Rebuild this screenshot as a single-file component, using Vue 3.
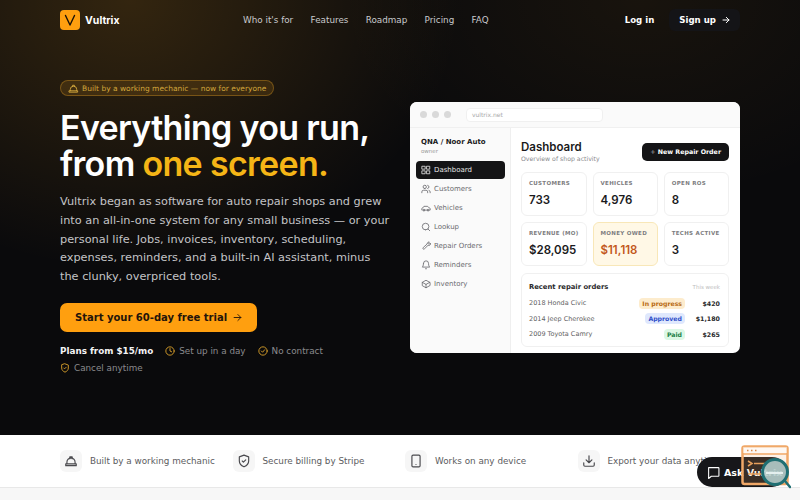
<template>
  <div class="page">
    <section class="hero">
      <header class="nav">
        <div class="brand">
          <span class="logo">
            <svg width="20" height="20" viewBox="0 0 20 20" fill="none" stroke="#1a1208" stroke-width="1.4" stroke-linecap="round" stroke-linejoin="round"><path d="M5.5 5.500l4.500 9.500 4.500-9.500" /></svg>
          </span>
          <span class="brand-name">Vultrix</span>
        </div>
        <nav class="links">
          <a v-for="link in links" :key="link">{{ link }}</a>
        </nav>
        <div class="actions">
          <a class="login">Log in</a>
          <a class="signup">Sign up
            <svg width="8" height="8" viewBox="0 0 24 24" fill="none" stroke="currentColor" stroke-width="3" stroke-linecap="round" stroke-linejoin="round"><path d="M3 12h18M13 4l8 8-8 8" /></svg>
          </a>
        </div>
      </header>

      <div class="hero-body">
        <div class="copy">
          <div class="badge">
            <svg width="11" height="11" viewBox="0 0 24 24" fill="none" stroke="currentColor" stroke-width="2" stroke-linecap="round" stroke-linejoin="round"><path d="M3 17h18v3H3zM5 17v-3a7 7 0 0 1 14 0v3M10 8V5h4v3" /></svg>
            Built by a working mechanic — now for everyone
          </div>
          <h1>Everything you run,<br />from <span>one screen.</span></h1>
          <p class="lead">Vultrix began as software for auto repair shops and grew into an all-in-one system for any small business — or your personal life. Jobs, invoices, inventory, scheduling, expenses, reminders, and a built-in AI assistant, minus the clunky, overpriced tools.</p>
          <a class="cta">Start your 60-day free trial
            <svg width="9" height="9" viewBox="0 0 24 24" fill="none" stroke="currentColor" stroke-width="2.4" stroke-linecap="round" stroke-linejoin="round"><path d="M3 12h18M13 4l8 8-8 8" /></svg>
          </a>
          <div class="perks">
            <strong>Plans from $15/mo</strong>
            <span class="perk">
              <svg width="10" height="10" viewBox="0 0 24 24" fill="none" stroke="#d9a02b" stroke-width="2.2" stroke-linecap="round" stroke-linejoin="round"><circle cx="12" cy="12" r="10" /><path d="M12 6v6l4 2" /></svg>
              Set up in a day
            </span>
            <span class="perk">
              <svg width="10" height="10" viewBox="0 0 24 24" fill="none" stroke="#d9a02b" stroke-width="2.2" stroke-linecap="round" stroke-linejoin="round"><circle cx="12" cy="12" r="10" /><path d="M8 12l3 3 5-6" /></svg>
              No contract
            </span>
            <span class="perk">
              <svg width="10" height="10" viewBox="0 0 24 24" fill="none" stroke="#d9a02b" stroke-width="2.2" stroke-linecap="round" stroke-linejoin="round"><path d="M12 2l8 3v7c0 5-3.500 8-8 10-4.500-2-8-5-8-10V5z" /><path d="M9 12l2 2 4-4" /></svg>
              Cancel anytime
            </span>
          </div>
        </div>

        <div class="app">
          <div class="chrome">
            <i></i><i></i><i></i>
            <div class="url">vultrix.net</div>
          </div>
          <div class="app-body">
            <aside class="side">
              <div class="org">QNA / Noor Auto</div>
              <div class="role">owner</div>
              <div v-for="item in menu" :key="item.label" class="menu-item" :class="{ active: item.label === 'Dashboard' }">
                <svg width="10" height="10" viewBox="0 0 24 24" fill="none" stroke="currentColor" stroke-width="2" stroke-linecap="round" stroke-linejoin="round"><path :d="item.icon" /></svg>
                {{ item.label }}
              </div>
            </aside>
            <main class="main">
              <div class="main-head">
                <div>
                  <div class="title">Dashboard</div>
                  <div class="sub">Overview of shop activity</div>
                </div>
                <a class="new-order"><span>+</span> New Repair Order</a>
              </div>
              <div class="stats">
                <div v-for="stat in stats" :key="stat.label" class="stat" :class="{ owed: stat.label === 'MONEY OWED' }">
                  <div class="stat-label">{{ stat.label }}</div>
                  <div class="stat-value">{{ stat.value }}</div>
                </div>
              </div>
              <div class="recent">
                <div class="recent-head">
                  <span>Recent repair orders</span>
                  <small>This week</small>
                </div>
                <div v-for="order in orders" :key="order.car" class="order">
                  <span class="car">{{ order.car }}</span>
                  <span class="pill" :class="order.kind">{{ order.status }}</span>
                  <span class="price">{{ order.price }}</span>
                </div>
              </div>
            </main>
          </div>
        </div>
      </div>
    </section>

    <section class="strip">
      <div v-for="item in strip" :key="item.label" class="strip-item">
        <span class="strip-icon">
          <svg width="14" height="14" viewBox="0 0 24 24" fill="none" stroke="currentColor" stroke-width="2" stroke-linecap="round" stroke-linejoin="round"><path :d="item.icon" /></svg>
        </span>
        {{ item.label }}
      </div>
    </section>
    <div class="below"></div>

    <a class="ask">
      <svg width="13" height="13" viewBox="0 0 24 24" fill="none" stroke="currentColor" stroke-width="2" stroke-linecap="round" stroke-linejoin="round"><path d="M3 3h18a1 1 0 0 1 1 1v14a1 1 0 0 1-1 1H8l-5 4z" /></svg>
      Ask Vultrix
    </a>
    <svg class="promo" width="50" height="48" viewBox="0 0 50 48" fill="none">
      <rect x="1.500" y="1.500" width="45" height="37.500" rx="2" fill="#f0a868" fill-opacity=".16" stroke="#f0a868" stroke-width="2.500" />
      <rect x="2" y="2" width="44" height="6" fill="#fff" fill-opacity=".5" />
      <path d="M2 9h44" stroke="#f0a868" stroke-width="1.500" />
      <path d="M6 5.500h1.500M10 5.500h1.500M14 5.500h1.500" stroke="#d9894a" stroke-width="1.500" />
      <path d="M7 16l4 2.500-4 2.500M13 18.500h12M7 29h14" stroke="#e8a05c" stroke-width="1.500" />
      <circle cx="34" cy="27" r="12.500" fill="#b4cdcc" fill-opacity=".9" stroke="#1f6f73" stroke-width="3" />
      <path d="M25 28h17" stroke="#e4efee" stroke-width="2" />
      <path d="M44 36l5 6" stroke="#1f6f73" stroke-width="2.500" stroke-linecap="round" />
    </svg>
  </div>
</template>

<script setup>
const links = ["Who it's for", 'Features', 'Roadmap', 'Pricing', 'FAQ']

const menu = [
  { label: 'Dashboard', icon: 'M3 3h7v7H3zM14 3h7v7h-7zM3 14h7v7H3zM14 14h7v7h-7z' },
  { label: 'Customers', icon: 'M16 21v-2a4 4 0 0 0-4-4H6a4 4 0 0 0-4 4v2M9 11a4 4 0 1 0 0-8 4 4 0 0 0 0 8M22 21v-2a4 4 0 0 0-3-3.900M16 3.100a4 4 0 0 1 0 7.800' },
  { label: 'Vehicles', icon: 'M3 17H2v-4l2-1 3-4h9l4 4 2 1v4h-2M7 17h10M7 19a2 2 0 1 0 0-4 2 2 0 0 0 0 4M17 19a2 2 0 1 0 0-4 2 2 0 0 0 0 4' },
  { label: 'Lookup', icon: 'M11 19a8 8 0 1 0 0-16 8 8 0 0 0 0 16M21 21l-4.300-4.300' },
  { label: 'Repair Orders', icon: 'M14.700 6.300a4 4 0 0 1 5.400-3.700l-3 3 2.300 2.300 3-3a4 4 0 0 1-5.400 5.400L8 19a2.100 2.100 0 0 1-3-3z' },
  { label: 'Reminders', icon: 'M6 8a6 6 0 0 1 12 0c0 7 3 9 3 9H3s3-2 3-9M10.300 21a2 2 0 0 0 3.400 0' },
  { label: 'Inventory', icon: 'M21 8l-9-5-9 5v8l9 5 9-5zM3 8l9 5 9-5M12 13v8' },
]

const stats = [
  { label: 'CUSTOMERS', value: '733' },
  { label: 'VEHICLES', value: '4,976' },
  { label: 'OPEN ROS', value: '8' },
  { label: 'REVENUE (MO)', value: '$28,095' },
  { label: 'MONEY OWED', value: '$11,118' },
  { label: 'TECHS ACTIVE', value: '3' },
]

const orders = [
  { car: '2018 Honda Civic', status: 'In progress', kind: 'amber', price: '$420' },
  { car: '2014 Jeep Cherokee', status: 'Approved', kind: 'blue', price: '$1,180' },
  { car: '2009 Toyota Camry', status: 'Paid', kind: 'green', price: '$265' },
]

const strip = [
  { label: 'Built by a working mechanic', icon: 'M3 17h18v3H3zM5 17v-3a7 7 0 0 1 14 0v3M10 8V5h4v3' },
  { label: 'Secure billing by Stripe', icon: 'M12 2l8 3v7c0 5-3.500 8-8 10-4.500-2-8-5-8-10V5zM9 12l2 2 4-4' },
  { label: 'Works on any device', icon: 'M7 2h10a2 2 0 0 1 2 2v16a2 2 0 0 1-2 2H7a2 2 0 0 1-2-2V4a2 2 0 0 1 2-2M12 18h.01' },
  { label: 'Export your data anytime', icon: 'M21 15v4a2 2 0 0 1-2 2H5a2 2 0 0 1-2-2v-4M12 3v12M7 10l5 5 5-5' },
]
</script>

<style>
html, body {
  margin: 0;
  background: #f7f7f7;
  overflow: hidden;
}
</style>

<style scoped>
.page {
  position: relative;
  width: 800px;
  height: 500px;
  overflow: hidden;
  font-family: "DejaVu Sans", sans-serif;
}
.hero {
  height: 435px;
  box-sizing: border-box;
  padding: 0 60px;
  color: #fff;
  background:
    radial-gradient(ellipse 330px 270px at 130px 0, rgba(255, 170, 30, 0.17), transparent 100%),
    radial-gradient(ellipse 300px 200px at 640px 0, rgba(255, 170, 30, 0.06), transparent 100%),
    #0a0a0c;
}
.nav {
  display: flex;
  align-items: center;
  height: 40px;
}
.brand {
  display: flex;
  align-items: center;
  gap: 5px;
  width: 183px;
}
.logo {
  display: flex;
  align-items: center;
  justify-content: center;
  width: 20px;
  height: 20px;
  border-radius: 4px;
  background: #ff9f0f;
}
.brand-name {
  font-family: Inter, sans-serif;
  font-size: 10.5px;
  font-weight: 700;
}
.links {
  display: flex;
  gap: 17.3px;
  font-size: 8.8px;
  color: #c9c9cc;
}
.actions {
  display: flex;
  align-items: center;
  margin-left: auto;
  font-size: 8.6px;
  font-weight: 700;
}
.login {
  margin-right: 15px;
}
.signup {
  display: flex;
  align-items: center;
  gap: 6px;
  padding: 6px 10px;
  border-radius: 6px;
  background: #141417;
}
.hero-body {
  display: flex;
  justify-content: space-between;
  align-items: flex-start;
  padding-top: 40px;
}
.copy {
  width: 332px;
}
.badge {
  display: flex;
  align-items: center;
  gap: 3px;
  width: fit-content;
  height: 14px;
  padding: 0 7px;
  border: 1px solid rgba(255, 180, 40, 0.3);
  border-radius: 8px;
  background: rgba(255, 170, 30, 0.13);
  color: #d2a63c;
  font-size: 7.5px;
}
h1 {
  margin: 14px 0 0;
  font-family: Inter, sans-serif;
  font-size: 34px;
  font-weight: 600;
  line-height: 36px;
  letter-spacing: -0.68px;
  white-space: nowrap;
}
h1 span {
  color: #f5b516;
}
.lead {
  margin: 11px 0 0;
  color: #c4c4c7;
  font-size: 11.3px;
  line-height: 18.8px;
}
.cta {
  display: inline-flex;
  align-items: center;
  gap: 6px;
  height: 29px;
  margin-top: 16px;
  padding: 0 15px;
  border-radius: 7px;
  background: #ff9f0f;
  color: #24140a;
  font-size: 10px;
  font-weight: 700;
}
.perks {
  display: flex;
  flex-wrap: wrap;
  align-items: center;
  gap: 7px 12px;
  margin-top: 14px;
  font-size: 8.8px;
  color: #8a8a8e;
}
.perks strong {
  color: #f4f4f4;
}
.perk {
  display: flex;
  align-items: center;
  gap: 4px;
}
.app {
  display: flex;
  flex-direction: column;
  width: 330px;
  height: 251px;
  margin-top: 22px;
  overflow: hidden;
  border-radius: 7px;
  background: #fff;
  color: #1a1a1c;
}
.chrome {
  display: flex;
  align-items: center;
  gap: 5px;
  flex: none;
  height: 25px;
  padding-left: 10px;
  background: #fafafa;
  border-bottom: 1px solid #f0f0f0;
}
.chrome i {
  width: 7px;
  height: 7px;
  border-radius: 50%;
  background: #d9d9d9;
}
.url {
  width: 130px;
  height: 12px;
  margin-left: 10px;
  padding-left: 5px;
  border-radius: 4px;
  background: #fff;
  border: 1px solid #f0f0f0;
  color: #a8a8a8;
  font-size: 6px;
  line-height: 12px;
}
.app-body {
  display: flex;
  flex: 1;
}
.side {
  width: 101px;
  flex: none;
  box-sizing: border-box;
  padding: 9px 5px 0 6px;
  background: #fafafa;
  border-right: 1px solid #efefef;
}
.org {
  padding-left: 5px;
  font-size: 7px;
  font-weight: 700;
  line-height: 10px;
}
.role {
  padding-left: 5px;
  margin-bottom: 4.5px;
  color: #999;
  font-size: 5.5px;
  line-height: 9px;
}
.menu-item {
  display: flex;
  align-items: center;
  gap: 3px;
  height: 18px;
  margin-bottom: 1px;
  padding-left: 5px;
  border-radius: 4px;
  color: #6b6b70;
  font-size: 7px;
}
.menu-item.active {
  background: #141416;
  color: #e4e4e4;
}
.main {
  flex: 1;
  min-width: 0;
  padding: 12px 11px 0 10px;
}
.main-head {
  display: flex;
  justify-content: space-between;
  align-items: flex-start;
}
.title {
  font-family: Inter, sans-serif;
  font-size: 11.5px;
  font-weight: 600;
  line-height: 15px;
}
.sub {
  margin-bottom: 1px;
  color: #8a8a8e;
  font-size: 6.2px;
  line-height: 8px;
}
.new-order {
  margin-top: 3px;
  padding: 0 8px;
  height: 18px;
  border-radius: 5px;
  background: #141416;
  color: #fff;
  font-size: 6.3px;
  font-weight: 700;
  line-height: 18px;
}
.new-order span {
  color: #aaa;
  font-weight: 400;
}
.stats {
  display: grid;
  grid-template-columns: repeat(3, 1fr);
  gap: 6px;
  margin-top: 8px;
}
.stat {
  box-sizing: border-box;
  height: 44px;
  padding: 6px 7px 0;
  border: 1px solid #f0f0f0;
  border-radius: 6px;
}
.stat.owed {
  background: #fff8e6;
  border-color: #f8e7b8;
}
.stat-label {
  color: #7d7d80;
  font-size: 5.5px;
  font-weight: 700;
  letter-spacing: 0.3px;
  line-height: 9px;
  white-space: nowrap;
}
.stat-value {
  margin-top: 5px;
  font-family: Inter, sans-serif;
  font-size: 11.5px;
  font-weight: 600;
  line-height: 15px;
}
.owed .stat-value {
  color: #c2571a;
}
.recent {
  margin-top: 7px;
  height: 74px;
  box-sizing: border-box;
  padding: 7px 8px 0 7px;
  border: 1px solid #f0f0f0;
  border-radius: 6px;
}
.recent-head {
  display: flex;
  justify-content: space-between;
  align-items: center;
  height: 11px;
  margin-bottom: 3.5px;
  font-size: 6.8px;
  font-weight: 700;
  color: #2a2a2c;
}
.recent-head small {
  color: #bdbdbd;
  font-size: 5.5px;
  font-weight: 400;
}
.order {
  display: flex;
  align-items: center;
  height: 15.5px;
  font-size: 6.5px;
  color: #5f5f63;
}
.car {
  margin-right: auto;
}
.pill {
  padding: 0 3px;
  border-radius: 4px;
  font-size: 6.2px;
  font-weight: 700;
  line-height: 11px;
}
.amber {
  background: #fdeccd;
  color: #b76a12;
}
.blue {
  background: #dfe8fd;
  color: #2f4fc9;
}
.green {
  background: #dcf8e5;
  color: #1a8048;
}
.price {
  width: 35px;
  text-align: right;
  color: #2a2a2c;
  font-size: 6.3px;
  font-weight: 700;
}
.strip {
  display: grid;
  grid-template-columns: repeat(4, 1fr);
  align-items: center;
  gap: 10px;
  height: 53px;
  box-sizing: border-box;
  padding: 0 60px;
  background: #fff;
  border-bottom: 1px solid #e8e8e8;
}
.strip-item {
  display: flex;
  align-items: center;
  gap: 8px;
  color: #5c5c60;
  font-size: 8.8px;
  white-space: nowrap;
}
.strip-icon {
  display: flex;
  align-items: center;
  justify-content: center;
  width: 22px;
  height: 22px;
  border-radius: 6px;
  background: #f6f6f6;
  color: #4a4a4e;
}
.ask {
  position: absolute;
  left: 697px;
  top: 457px;
  display: flex;
  align-items: center;
  gap: 4px;
  box-sizing: border-box;
  width: 90px;
  height: 30px;
  padding-left: 10px;
  border-radius: 15px;
  background: #17171a;
  color: #fff;
  font-size: 9.5px;
  font-weight: 700;
  white-space: nowrap;
  overflow: hidden;
}
.promo {
  position: absolute;
  left: 741px;
  top: 445px;
}
</style>
